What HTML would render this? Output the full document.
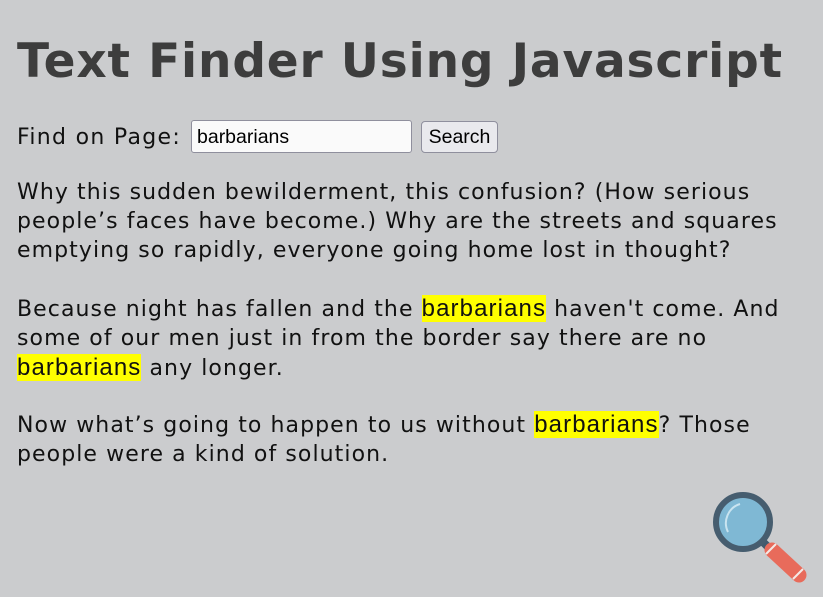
<!DOCTYPE html>
<html><head><style>
body{margin:0;background:#cbccce;width:823px;height:597px;overflow:hidden;font-family:"DejaVu Sans",Verdana,sans-serif;color:#111;position:relative}
h1{position:absolute;left:17px;top:33px;margin:0;font-size:47px;font-weight:bold;color:#3d3d3d;white-space:nowrap;line-height:58px;letter-spacing:0.85px}
.find{position:absolute;left:17px;top:123px;font-size:22px;line-height:30px;white-space:nowrap;letter-spacing:1.3px}
.inp{position:absolute;left:191px;top:120px;width:221px;height:33px;background:#fafafa;border:1px solid #8f8f9d;border-radius:3px;box-sizing:border-box;font-family:"Liberation Sans",sans-serif;font-size:19.5px;line-height:33px;padding-left:5px;color:#000}
.btn{position:absolute;left:421px;top:121px;width:77px;height:32px;background:#e9e9ed;border:1px solid #8f8f9d;border-radius:4px;box-sizing:border-box;font-family:"Liberation Sans",sans-serif;font-size:19.5px;line-height:31px;text-align:center;color:#000}
.p{position:absolute;left:17px;font-size:22px;line-height:29px;width:806px;letter-spacing:1.08px;white-space:nowrap}
mark{background:#ffff00;color:#111;font-family:"Liberation Sans",sans-serif;font-size:24px;letter-spacing:1.1px;line-height:29px}
</style></head><body>
<h1>Text Finder Using Javascript</h1>
<div class="find">Find on Page:</div>
<div class="inp">barbarians</div>
<div class="btn">Search</div>
<div class="p" style="top:178px">Why this sudden bewilderment, this confusion? (How serious<br>people’s faces have become.) Why are the streets and squares<br>emptying so rapidly, everyone going home lost in thought?</div>
<div class="p" style="top:294px">Because night has fallen and the <mark>barbarians</mark> haven't come. And<br>some of our men just in from the border say there are no<br><mark>barbarians</mark> any longer.</div>
<div class="p" style="top:410px">Now what’s going to happen to us without <mark>barbarians</mark>? Those<br>people were a kind of solution.</div>
<svg style="position:absolute;left:700px;top:480px" width="123" height="117" viewBox="0 0 123 117">
<line x1="63" y1="62" x2="70" y2="69" stroke="#415a6e" stroke-width="8"/>
<line x1="72" y1="70" x2="99" y2="95" stroke="#e86b5b" stroke-width="15" stroke-linecap="round"/>
<line x1="66" y1="74" x2="76" y2="64" stroke="#f4e9e6" stroke-width="2"/>
<line x1="93" y1="99" x2="103" y2="89" stroke="#f4e9e6" stroke-width="2"/>
<circle cx="43" cy="42" r="27" fill="#7fb8d4" stroke="#465d6f" stroke-width="6"/>
<path d="M28 52 A20 20 0 0 1 40 24" fill="none" stroke="#c9e4f0" stroke-width="2"/>
</svg>
</body></html>
